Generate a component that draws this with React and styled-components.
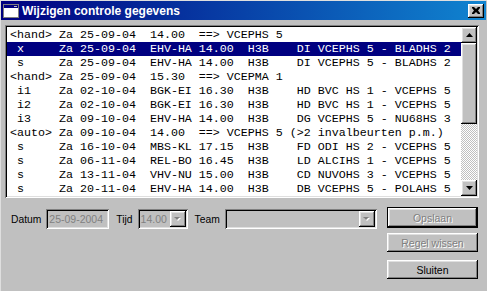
import React from "react";
import styled, { createGlobalStyle } from "styled-components";

const rows = [
  "<hand> Za 25-09-04  14.00  ==> VCEPHS 5",
  " x     Za 25-09-04  EHV-HA 14.00  H3B    DI VCEPHS 5 - BLADHS 2",
  " s     Za 25-09-04  EHV-HA 14.00  H3B    DI VCEPHS 5 - BLADHS 2",
  "<hand> Za 25-09-04  15.30  ==> VCEPMA 1",
  " i1    Za 02-10-04  BGK-EI 16.30  H3B    HD BVC HS 1 - VCEPHS 5",
  " i2    Za 02-10-04  BGK-EI 16.30  H3B    HD BVC HS 1 - VCEPHS 5",
  " i3    Za 09-10-04  EHV-HA 14.00  H3B    DG VCEPHS 5 - NU68HS 3",
  "<auto> Za 09-10-04  14.00  ==> VCEPHS 5 (>2 invalbeurten p.m.)",
  " s     Za 16-10-04  MBS-KL 17.15  H3B    FD ODI HS 2 - VCEPHS 5",
  " s     Za 06-11-04  REL-BO 16.45  H3B    LD ALCIHS 1 - VCEPHS 5",
  " s     Za 13-11-04  VHV-NU 15.00  H3B    CD NUVOHS 3 - VCEPHS 5",
  " s     Za 20-11-04  EHV-HA 14.00  H3B    DB VCEPHS 5 - POLAHS 5",
];

const raised = `
  box-shadow: inset -1px -1px #000, inset 1px 1px #fff,
    inset -2px -2px #808080, inset 2px 2px #dfdfdf;
`;

const sunken = `
  box-shadow: inset 1px 1px #808080, inset -1px -1px #fff,
    inset 2px 2px #000, inset -2px -2px #dfdfdf;
`;

function App() {
  return (
    <>
      <GlobalStyle />
      <Window>
        <TitleBar>
          <svg width="16" height="14" viewBox="0 0 16 14">
            <rect x="0.5" y="0.5" width="15" height="13" fill="#fff" stroke="#808080" />
            <rect x="1" y="1" width="14" height="3" fill="#000080" />
            <rect x="11" y="2" width="3" height="1" fill="#c0c0c0" />
          </svg>
          <Title>Wijzigen controle gegevens</Title>
          <CloseButton>
            <svg width="8" height="7" viewBox="0 0 8 7">
              <path d="M0 0h2l2 2 2-2h2v1L6 3.5 8 6v1H6L4 5 2 7H0V6l2-2.5L0 1z" fill="#000" />
            </svg>
          </CloseButton>
        </TitleBar>
        <Body>
          <ListBox>
            <Rows>
              {rows.map((r, i) => (
                <Row key={i} $selected={i === 1}>
                  {r}
                </Row>
              ))}
            </Rows>
            <ScrollBar>
              <ScrollButton>
                <svg width="7" height="4" viewBox="0 0 7 4">
                  <path d="M3.5 0L7 4H0z" fill="#000" />
                </svg>
              </ScrollButton>
              <Thumb />
              <Track />
              <ScrollButton>
                <svg width="7" height="4" viewBox="0 0 7 4">
                  <path d="M0 0h7L3.5 4z" fill="#000" />
                </svg>
              </ScrollButton>
            </ScrollBar>
          </ListBox>
          <Controls>
            <Fields>
              <Label>Datum</Label>
              <Field $width={63} $gap={7}>
                <FieldText>25-09-2004</FieldText>
              </Field>
              <Label>Tijd</Label>
              <Field $width={50} $gap={7}>
                <FieldText>14.00</FieldText>
                <DropButton>
                  <Arrow />
                </DropButton>
              </Field>
              <Label>Team</Label>
              <Field $width={152} $gap={0}>
                <FieldText />
                <DropButton>
                  <Arrow />
                </DropButton>
              </Field>
            </Fields>
            <Buttons>
              <Button $default $disabled>Opslaan</Button>
              <Button $disabled $mt={5}>Regel wissen</Button>
              <Button $mt={8}>Sluiten</Button>
            </Buttons>
          </Controls>
        </Body>
      </Window>
    </>
  );
}

function Arrow() {
  return (
    <svg width="8" height="5" viewBox="0 0 8 5">
      <path d="M1 1h6L4 4z" fill="#fff" />
      <path d="M0 0h6L3 3z" fill="#808080" />
    </svg>
  );
}

const GlobalStyle = createGlobalStyle`
  html, body {
    margin: 0;
    padding: 0;
    background: #c0c0c0;
  }
`;

const Window = styled.div`
  width: 487px;
  height: 291px;
  box-sizing: border-box;
  padding: 1px 0 0 1px;
  background: #c0c0c0;
  box-shadow: inset 1px 1px #dfdfdf;
  font-family: "Liberation Sans", Arial, sans-serif;
  overflow: hidden;
`;

const TitleBar = styled.div`
  height: 19px;
  margin-right: 1px;
  display: flex;
  align-items: center;
  padding: 0 2px 0 2px;
  background: linear-gradient(90deg, #000080, #1084d0);
  svg {
    flex: none;
  }
`;

const Title = styled.div`
  flex: 1;
  margin-left: 3px;
  color: #fff;
  font-weight: bold;
  font-size: 12px;
  white-space: nowrap;
`;

const CloseButton = styled.div`
  width: 16px;
  height: 14px;
  display: flex;
  align-items: center;
  justify-content: center;
  background: #c0c0c0;
  ${raised}
`;

const Body = styled.div`
  padding: 5px 8px 0 4px;
`;

const ListBox = styled.div`
  height: 173px;
  box-sizing: border-box;
  padding: 2px;
  display: flex;
  background: #fff;
  ${sunken}
`;

const Rows = styled.div`
  flex: 1;
  padding-top: 1px;
  overflow: hidden;
`;

const Row = styled.div`
  height: 14px;
  line-height: 14px;
  padding-left: 3px;
  white-space: pre;
  font-family: "Liberation Mono", "Courier New", monospace;
  font-size: 11.67px;
  color: ${(p) => (p.$selected ? "#fff" : "#000")};
  background: ${(p) => (p.$selected ? "#000080" : "transparent")};
`;

const ScrollBar = styled.div`
  width: 16px;
  display: flex;
  flex-direction: column;
`;

const ScrollButton = styled.div`
  height: 16px;
  flex: none;
  display: flex;
  align-items: center;
  justify-content: center;
  background: #c0c0c0;
  ${raised}
`;

const Thumb = styled.div`
  height: 81px;
  flex: none;
  background: #c0c0c0;
  ${raised}
`;

const Track = styled.div`
  flex: 1;
  background: repeating-conic-gradient(#c0c0c0 0 25%, #fff 0 50%) 0 0 / 2px 2px;
`;

const Controls = styled.div`
  display: flex;
  justify-content: space-between;
  align-items: flex-start;
  margin-top: 9px;
  padding-left: 6px;
  padding-right: 1px;
`;

const Fields = styled.div`
  display: flex;
  align-items: center;
  margin-top: 2px;
  font-size: 10.3px;
`;

const Label = styled.span`
  margin-right: 5px;
  color: #000;
`;

const Field = styled.div`
  width: ${(p) => p.$width}px;
  height: 20px;
  box-sizing: border-box;
  padding: 2px;
  margin-right: ${(p) => p.$gap}px;
  display: flex;
  align-items: stretch;
  background: #c0c0c0;
  ${sunken}
`;

const FieldText = styled.div`
  flex: 1;
  padding-left: 1px;
  line-height: 16px;
  color: #808080;
  font-size: 10.5px;
`;

const DropButton = styled.div`
  width: 16px;
  display: flex;
  align-items: center;
  justify-content: center;
  background: #c0c0c0;
  ${raised}
`;

const Buttons = styled.div`
  display: flex;
  flex-direction: column;
  width: 91px;
`;

const Button = styled.div`
  height: ${(p) => (p.$default ? 21 : 19)}px;
  margin-top: ${(p) => p.$mt || 0}px;
  box-sizing: border-box;
  display: flex;
  align-items: center;
  justify-content: center;
  font-size: 10.5px;
  background: #c0c0c0;
  color: ${(p) => (p.$disabled ? "#808080" : "#000")};
  text-shadow: ${(p) => (p.$disabled ? "1px 1px 0 #fff" : "none")};
  ${(p) =>
    p.$default
      ? `box-shadow: inset 0 0 0 1px #000, inset -2px -2px #000, inset 2px 2px #fff,
    inset -3px -3px #808080, inset 3px 3px #dfdfdf;`
      : raised}
`;

export default App;
